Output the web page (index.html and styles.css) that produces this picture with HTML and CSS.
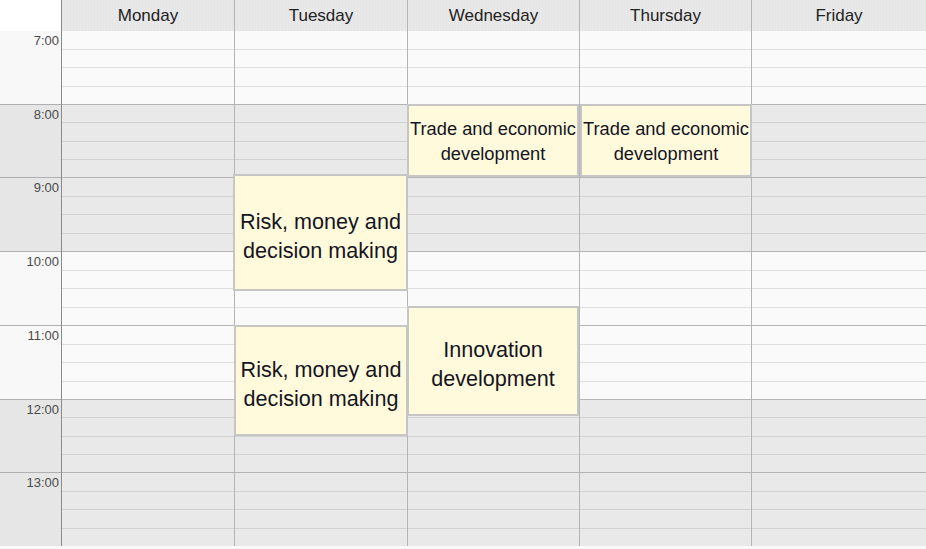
FILE: index.html
```html
<!DOCTYPE html>
<html>
<head>
<meta charset="utf-8">
<link rel="stylesheet" href="styles.css">
</head>
<body>
<div class="cal">
  <div class="head">
    <div class="corner"></div>
    <div class="day-h">Monday</div>
    <div class="day-h">Tuesday</div>
    <div class="day-h">Wednesday</div>
    <div class="day-h">Thursday</div>
    <div class="day-h last">Friday</div>
  </div>
  <div class="body">
    <div class="times">
      <div class="t light">7:00</div>
      <div class="t dark">8:00</div>
      <div class="t dark">9:00</div>
      <div class="t light">10:00</div>
      <div class="t light">11:00</div>
      <div class="t dark">12:00</div>
      <div class="t dark">13:00</div>
    </div>
    <div class="col" id="mon"></div>
    <div class="col" id="tue">
      <div class="ev big" style="top:143px;height:117px;left:-2px;right:-1px">Risk, money and decision making</div>
      <div class="ev big" style="top:294px;height:111px;left:-1px;right:-1px">Risk, money and decision making</div>
    </div>
    <div class="col" id="wed">
      <div class="ev" style="top:73px;height:73px;left:-1px;right:0">Trade and economic development</div>
      <div class="ev big" style="top:275px;height:110px;left:-1px;right:0">Innovation development</div>
    </div>
    <div class="col" id="thu">
      <div class="ev" style="top:73px;height:73px;left:0;right:-1px">Trade and economic development</div>
    </div>
    <div class="col last" id="fri"></div>
  </div>
</div>
<script>
  var pattern = ['light','dark','dark','light','light','dark','dark'];
  document.querySelectorAll('.col').forEach(function(col){
    var frag = document.createDocumentFragment();
    pattern.forEach(function(p, i){
      var h = document.createElement('div');
      h.className = 'hour ' + p + (i === 0 ? ' first' : '');
      for (var q = 0; q < 4; q++) {
        var s = document.createElement('div');
        s.className = 'q';
        h.appendChild(s);
      }
      frag.appendChild(h);
    });
    col.insertBefore(frag, col.firstChild);
  });
</script>
</body>
</html>
```

FILE: styles.css
```css
* { box-sizing: border-box; }
html, body { margin: 0; padding: 0; }
body {
  width: 926px;
  height: 549px;
  overflow: hidden;
  background: #fafafa;
  font-family: "Liberation Sans", Arial, sans-serif;
}
.cal { width: 926px; }
.head {
  display: grid;
  grid-template-columns: 62px 173px 173px 172px 172px 1fr;
  height: 31px;
  border-bottom: 1px solid #b0b0b0;
}
.corner { background: #ffffff; border-right: 1px solid #8a8a8a; }
.day-h {
  background: repeating-linear-gradient(90deg, #e8e8e8 0 2px, #e5e5e5 2px 3px);
  border-right: 1px solid #b4b4b4;
  font-size: 17px;
  color: #222;
  text-align: center;
  line-height: 31px;
}
.day-h.last { border-right: none; }
.body {
  display: grid;
  grid-template-columns: 62px 173px 173px 172px 172px 1fr;
}
.times {
  display: flex;
  flex-direction: column;
  border-right: 1px solid #8a8a8a;
}
.t, .hour { height: 74px; flex: none; }
.t:nth-child(1), .hour:nth-child(1) { height: 73px; }
.t:nth-child(2), .hour:nth-child(2) { height: 73px; }
.t:nth-child(6), .hour:nth-child(6) { height: 73px; }
.t {
  border-top: 1px solid #b0b0b0;
  text-align: right;
  padding: 2px 2px 0 0;
  font-size: 13px;
  color: #4a4a4a;
  line-height: 15px;
}
.t:first-child { border-top: none; padding-top: 2px; }
.t.light { background: #f8f8f8; }
.t.dark { background: #e6e6e6; }
.col {
  position: relative;
  display: flex;
  flex-direction: column;
  border-right: 1px solid #b4b4b4;
}
.col.last { border-right: none; }
.hour {
  display: flex;
  flex-direction: column;
  border-top: 1px solid #b4b4b4;
}
.hour.first { border-top: none; }
.hour.light { background: #fafafa; }
.hour.dark { background: #e9e9e9; }
.q { flex: 1; }
.hour.light .q + .q { border-top: 1px solid #e0e0e0; }
.hour.dark .q + .q { border-top: 1px solid #d2d2d2; }
.ev {
  position: absolute;
  display: flex;
  align-items: center;
  justify-content: center;
  text-align: center;
  background: #fffadc;
  border: 2px solid #c6c6c6;
  color: #15151f;
  font-size: 18.3px;
  line-height: 25px;
  padding: 0 1px;
  z-index: 2;
}
.ev.big {
  font-size: 21.6px;
  line-height: 29px;
  padding-top: 6px;
}
```
